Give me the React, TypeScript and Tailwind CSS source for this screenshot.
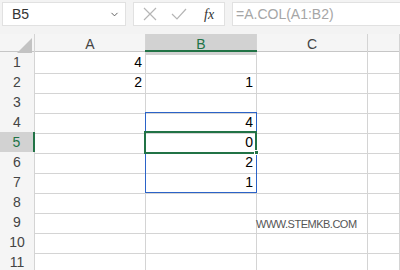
import { ChevronDown } from "lucide-react";

const cols = ["A", "B", "C", ""];
const rows = [1, 2, 3, 4, 5, 6, 7, 8, 9, 10, 11];

const values: Record<string, string> = {
  A1: "4",
  A2: "2",
  B2: "1",
  B4: "4",
  B5: "0",
  B6: "2",
  B7: "1",
};

const Toolbar = () => (
  <div className="flex h-[34px] items-start gap-[7px] bg-[#f3f3f3] pt-[2px] pl-[2px]">
    <div className="flex h-[24px] w-[124px] items-center justify-between border border-[#e1e1e1] bg-white pl-[9px] pr-[5px] text-[14px] text-[#333]">
      <span>B5</span>
      <ChevronDown size={11} strokeWidth={2} className="text-[#555]" />
    </div>
    <div className="flex h-[24px] w-[92px] items-center border border-[#e1e1e1] bg-white pl-[9px]">
      <svg width="14" height="14" viewBox="0 0 14 14" className="text-[#b5b5b5]">
        <path d="M1 1 L13 13 M13 1 L1 13" stroke="currentColor" strokeWidth="1.2" fill="none" />
      </svg>
      <svg width="16" height="12" viewBox="0 0 16 12" className="ml-[14px] text-[#b5b5b5]">
        <path d="M1 6 L6 11 L15 1" stroke="currentColor" strokeWidth="1.2" fill="none" />
      </svg>
      <span className="ml-[17px] font-['Liberation_Serif',serif] text-[14px] italic text-[#333]">
        fx
      </span>
    </div>
    <div className="flex h-[24px] flex-1 items-center border border-r-0 border-[#e1e1e1] bg-white pl-[3px] text-[14px] text-[#a6a6a6]">
      =A.COL(A1:B2)
    </div>
  </div>
);

const Header = () => (
  <div className="grid h-[18px] grid-cols-[35px_111px_111px_111px_1fr] border-b border-[#c6c6c6] bg-[#f5f5f5] text-[14px] text-[#444]">
    <div className="relative border-r border-[#d4d4d4]">
      <div className="absolute right-[2px] bottom-[2px] h-0 w-0 border-b-[15px] border-l-[15px] border-b-[#c3c3c3] border-l-transparent" />
    </div>
    {cols.map((c, i) => (
      <div
        key={i}
        className={
          c === "B"
            ? "flex items-center justify-center border-r border-[#d4d4d4] bg-[#d2d2d2] text-[#217346]"
            : "flex items-center justify-center border-r border-[#d4d4d4]"
        }
      >
        {c}
      </div>
    ))}
  </div>
);

export default function App() {
  return (
    <div className="h-[270px] w-[400px] overflow-hidden bg-white font-['Liberation_Sans',sans-serif]">
      <Toolbar />
      <div className="relative">
        <Header />
        <div className="absolute left-[35px] right-0 top-[16px] h-[2px]">
          <div className="ml-[110px] h-[2px] w-[112px] bg-[#217346]" />
        </div>
        {rows.map((r) => (
          <div
            key={r}
            className="grid h-[20px] grid-cols-[35px_111px_111px_111px_1fr] text-[14px]"
          >
            <div
              className={
                r === 5
                  ? "flex items-center justify-center border-r-2 border-b border-r-[#217346] border-b-[#d4d4d4] bg-[#d2d2d2] text-[#217346]"
                  : "flex items-center justify-center border-r border-b border-[#d4d4d4] bg-[#f5f5f5] text-[#444]"
              }
            >
              {r}
            </div>
            {cols.map((c, i) => (
              <div
                key={i}
                className="flex items-center justify-end border-r border-b border-[#d4d4d4] pr-[3px] text-black"
              >
                {c ? values[c + r] : ""}
              </div>
            ))}
          </div>
        ))}
        {/* selected range B4:B7 */}
        <div className="pointer-events-none absolute left-[145px] top-[78px] h-[81px] w-[112px] border border-[#2b63c8]" />
        {/* active cell B5 */}
        <div className="pointer-events-none absolute left-[144px] top-[97px] h-[23px] w-[113px] border-2 border-[#217346]" />
        <div className="pointer-events-none absolute left-[254px] top-[116px] h-[5px] w-[5px] border border-white bg-[#217346]" />
        <div className="pointer-events-none absolute left-[256px] top-[182px] text-[11px] tracking-[-0.5px] text-[#555]">
          WWW.STEMKB.COM
        </div>
      </div>
    </div>
  );
}
